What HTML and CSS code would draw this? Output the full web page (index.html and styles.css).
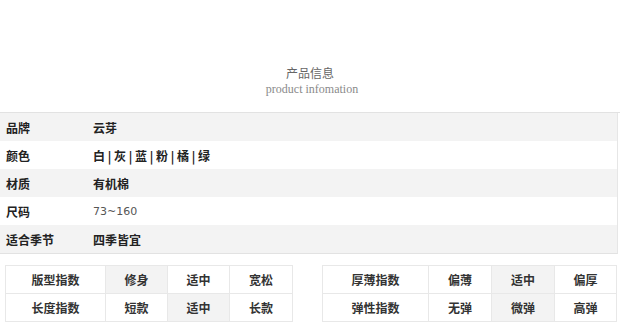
FILE: index.html
```html
<!DOCTYPE html>
<html lang="zh">
<head>
<meta charset="utf-8">
<link rel="stylesheet" href="styles.css">
</head>
<body>
<div class="page">
  <div class="title">
    <div class="title-cn">产品信息</div>
    <div class="title-en">product infomation</div>
  </div>
  <div class="info">
    <div class="row shade"><div class="label">品牌</div><div class="value">云芽</div></div>
    <div class="row"><div class="label">颜色</div><div class="value">白 | 灰 | 蓝 | 粉 | 橘 | 绿</div></div>
    <div class="row shade"><div class="label">材质</div><div class="value">有机棉</div></div>
    <div class="row"><div class="label">尺码</div><div class="value plain">73~160</div></div>
    <div class="row shade"><div class="label">适合季节</div><div class="value">四季皆宜</div></div>
  </div>
  <div class="indexes">
    <div class="grid left">
      <div class="cell">版型指数</div><div class="cell on">修身</div><div class="cell">适中</div><div class="cell">宽松</div>
      <div class="cell">长度指数</div><div class="cell">短款</div><div class="cell on">适中</div><div class="cell">长款</div>
    </div>
    <div class="grid right">
      <div class="cell">厚薄指数</div><div class="cell">偏薄</div><div class="cell on">适中</div><div class="cell">偏厚</div>
      <div class="cell">弹性指数</div><div class="cell">无弹</div><div class="cell on">微弹</div><div class="cell">高弹</div>
    </div>
  </div>
</div>
</body>
</html>
```

FILE: styles.css
```css
html, body {
  margin: 0;
  padding: 0;
  background: #fff;
}
.page {
  width: 620px;
  height: 325px;
  overflow: hidden;
  font-family: "Noto Sans CJK SC", "Liberation Sans", sans-serif;
}
.title {
  padding-top: 64px;
  height: 112px;
  box-sizing: border-box;
  text-align: center;
}
.title-cn {
  font-size: 12px;
  line-height: 17px;
  color: #666;
}
.title-en {
  font-family: "Liberation Serif", serif;
  font-size: 12px;
  line-height: 16px;
  color: #8a8a8a;
  padding-left: 4px;
}
.info {
  border-top: 1px solid #e2e2e2;
}
.row {
  display: flex;
  align-items: center;
  height: 28px;
  width: 617px;
  border-right: 1px solid #e6e6e6;
  font-size: 12px;
  font-weight: 700;
  color: #222;
}
.row.shade {
  background: #f3f3f3;
}
.row:last-child {
  border-bottom: 1px solid #e2e2e2;
}
.label {
  width: 87px;
  padding-left: 6px;
}
.value.plain {
  font-family: "DejaVu Sans", sans-serif;
  font-weight: 400;
  color: #555;
  font-size: 11px;
}
.indexes {
  display: flex;
  margin-top: 11px;
  padding-left: 5px;
  gap: 29px;
}
.grid {
  display: grid;
  grid-auto-rows: 28px;
  border-top: 1px solid #e8e8e8;
  border-left: 1px solid #e8e8e8;
}
.grid.left {
  grid-template-columns: 100px 62px 62px 63px;
}
.grid.right {
  grid-template-columns: 106px 63px 63px 62px;
}
.cell {
  display: flex;
  align-items: center;
  justify-content: center;
  border-right: 1px solid #e8e8e8;
  border-bottom: 1px solid #e8e8e8;
  font-size: 12px;
  font-weight: 700;
  color: #333;
}
.cell.on {
  background: #f3f3f3;
}
```
